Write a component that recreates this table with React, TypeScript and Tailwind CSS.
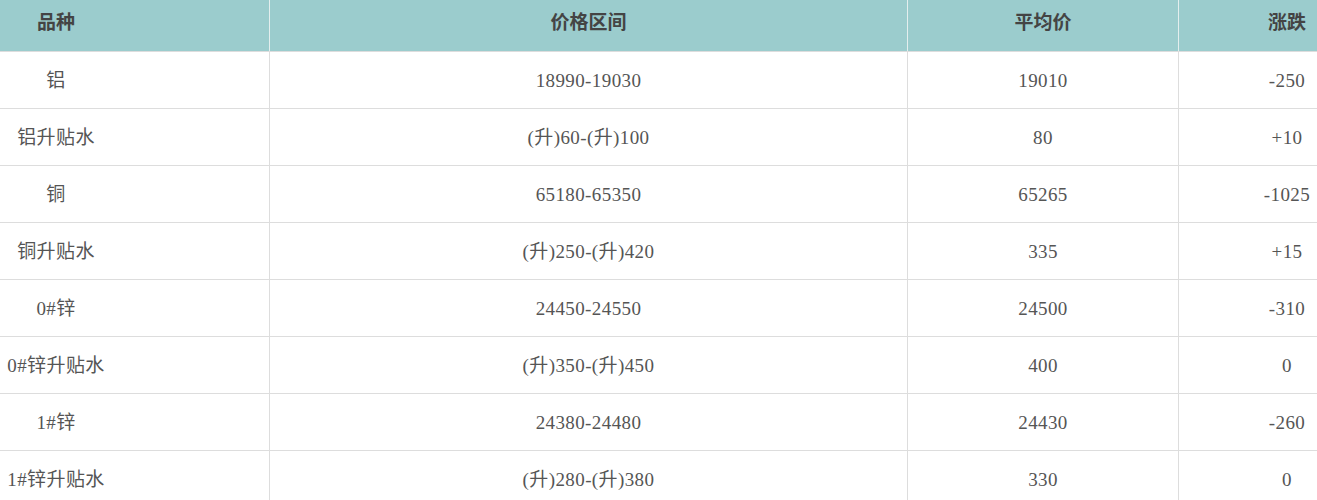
const ROWS = [
  { name: '铝', range: '18990-19030', avg: '19010', change: '-250' },
  { name: '铝升贴水', range: '(升)60-(升)100', avg: '80', change: '+10' },
  { name: '铜', range: '65180-65350', avg: '65265', change: '-1025' },
  { name: '铜升贴水', range: '(升)250-(升)420', avg: '335', change: '+15' },
  { name: '0#锌', range: '24450-24550', avg: '24500', change: '-310' },
  { name: '0#锌升贴水', range: '(升)350-(升)450', avg: '400', change: '0' },
  { name: '1#锌', range: '24380-24480', avg: '24430', change: '-260' },
  { name: '1#锌升贴水', range: '(升)280-(升)380', avg: '330', change: '0' },
]

const COLS = 'grid grid-cols-[270px_638px_271px_216px]'

export default function App() {
  return (
    <div
      className="w-[1317px] h-[500px] overflow-hidden bg-white"
      style={{ fontFamily: '"Liberation Serif", "Noto Sans CJK SC", serif' }}
    >
      <div className="w-[1395px]">
        {/* header */}
        <div className={`${COLS} h-[52px] bg-[#9bcccd] border-b border-[#dddddd] text-[19px] font-bold text-[#444444]`}>
          <div className="flex items-center border-r border-[#e4eeee] pb-1">
            <div className="w-[112px] text-center">品种</div>
          </div>
          <div className="flex items-center justify-center border-r border-[#e4eeee] pb-1">价格区间</div>
          <div className="flex items-center justify-center border-r border-[#e4eeee] pb-1">平均价</div>
          <div className="flex items-center justify-center pb-1">涨跌</div>
        </div>

        {/* rows */}
        {ROWS.map(r => (
          <div key={r.name} className={`${COLS} h-[57px] border-b border-[#dddddd] text-[19px] tracking-[0.4px] text-[#555555]`}>
            <div className="flex items-center border-r border-[#dddddd] pt-0.5">
              <div className="w-[112px] text-center whitespace-nowrap">{r.name}</div>
            </div>
            <div className="flex items-center justify-center border-r border-[#dddddd] whitespace-nowrap pt-0.5">{r.range}</div>
            <div className="flex items-center justify-center border-r border-[#dddddd] pt-0.5">{r.avg}</div>
            <div className="flex items-center justify-center pt-0.5">{r.change}</div>
          </div>
        ))}
      </div>
    </div>
  )
}
